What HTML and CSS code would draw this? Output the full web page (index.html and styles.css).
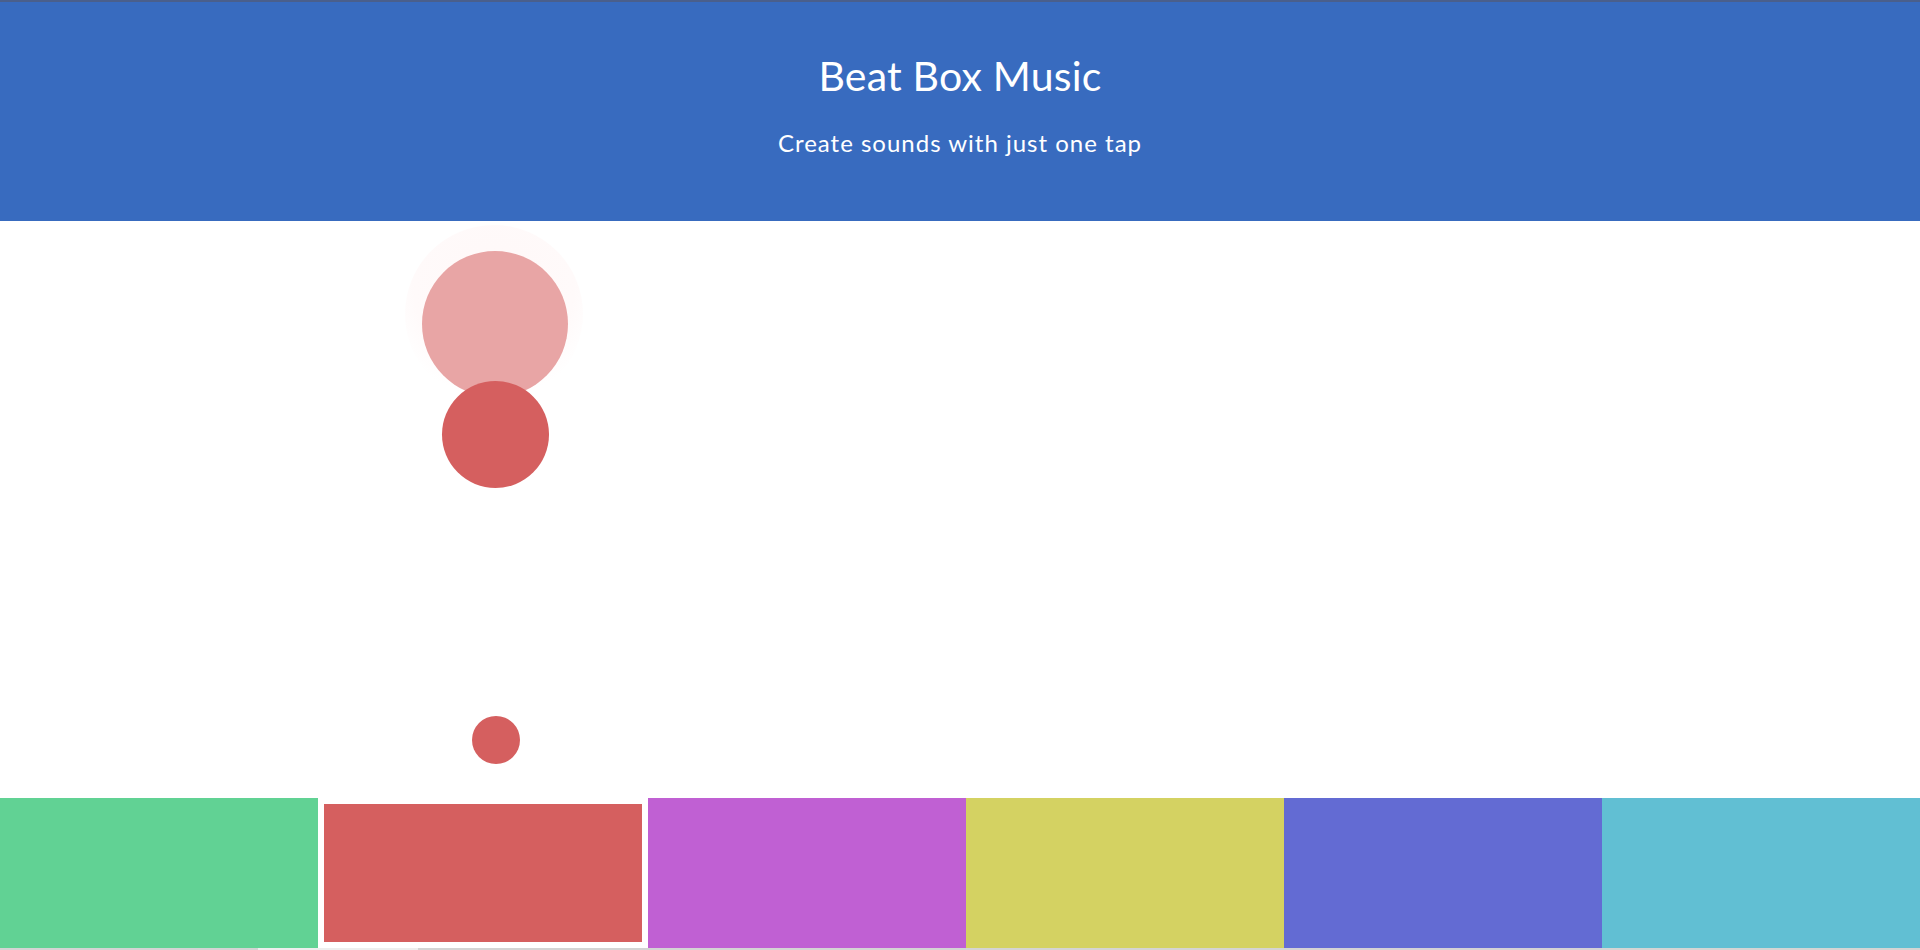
FILE: index.html
```html
<!DOCTYPE html>
<html>
<head>
<meta charset="utf-8">
<title>Beat Box Music</title>
<link rel="stylesheet" href="styles.css">
</head>
<body>
<header class="header">
  <h1 class="title">Beat Box Music</h1>
  <p class="subtitle">Create sounds with just one tap</p>
</header>
<main class="stage">
  <div class="bubble bubble-haze"></div>
  <div class="bubble bubble-fade"></div>
  <div class="bubble bubble-mid"></div>
  <div class="bubble bubble-small"></div>
</main>
<footer class="pads">
  <div class="pad pad-green"></div>
  <div class="pad pad-red pad-active"></div>
  <div class="pad pad-purple"></div>
  <div class="pad pad-yellow"></div>
  <div class="pad pad-blue"></div>
  <div class="pad pad-cyan"></div>
</footer>
<div class="scrollstrip"><span class="strip-light"></span></div>
</body>
</html>
```
FILE: styles.css
```css
html, body {
  margin: 0;
  padding: 0;
  height: 950px;
  overflow: hidden;
  background: #ffffff;
  font-family: "Lato", "Open Sans", sans-serif;
}
.header {
  height: 221px;
  box-sizing: border-box;
  background: #386bbf;
  border-top: 2px solid #4a5f8c;
  color: #ffffff;
  text-align: center;
  padding-top: 46px;
}
.title {
  margin: 0;
  font-size: 41px;
  font-weight: 400;
  line-height: 56px;
  letter-spacing: 0.2px;
}
.subtitle {
  margin: 24px 0 0;
  font-size: 24px;
  font-weight: 400;
  line-height: 30px;
  letter-spacing: 1px;
}
.stage {
  position: relative;
  height: 577px;
}
.bubble {
  position: absolute;
  border-radius: 50%;
}
.bubble-haze {
  left: 405px;
  top: 4px;
  width: 178px;
  height: 178px;
  background: radial-gradient(circle at 50% 35%, #fff8f8 0%, #fffafa 55%, #ffffff 75%);
}
.bubble-fade {
  left: 422px;
  top: 30px;
  width: 146px;
  height: 146px;
  background: #e8a5a5;
}
.bubble-mid {
  left: 442px;
  top: 160px;
  width: 107px;
  height: 107px;
  background: #d55f5f;
}
.bubble-small {
  left: 472px;
  top: 495px;
  width: 48px;
  height: 48px;
  background: #d55f5f;
}
.pads {
  display: flex;
  height: 150px;
}
.pad {
  flex: 1 1 0;
  height: 150px;
}
.pad-active {
  box-sizing: border-box;
  border: 6px solid #ffffff;
}
.pad-green { background: #61d294; }
.pad-red { background: #d55f5f; }
.pad-purple { background: #c060d3; }
.pad-yellow { background: #d4d262; }
.pad-blue { background: #636bd3; }
.pad-cyan { background: #61bfd3; }
.scrollstrip {
  height: 2px;
  background: #d4d4d4;
  display: flex;
}
.strip-light {
  display: block;
  margin-left: 258px;
  width: 160px;
  background: #eeeeee;
}
```
